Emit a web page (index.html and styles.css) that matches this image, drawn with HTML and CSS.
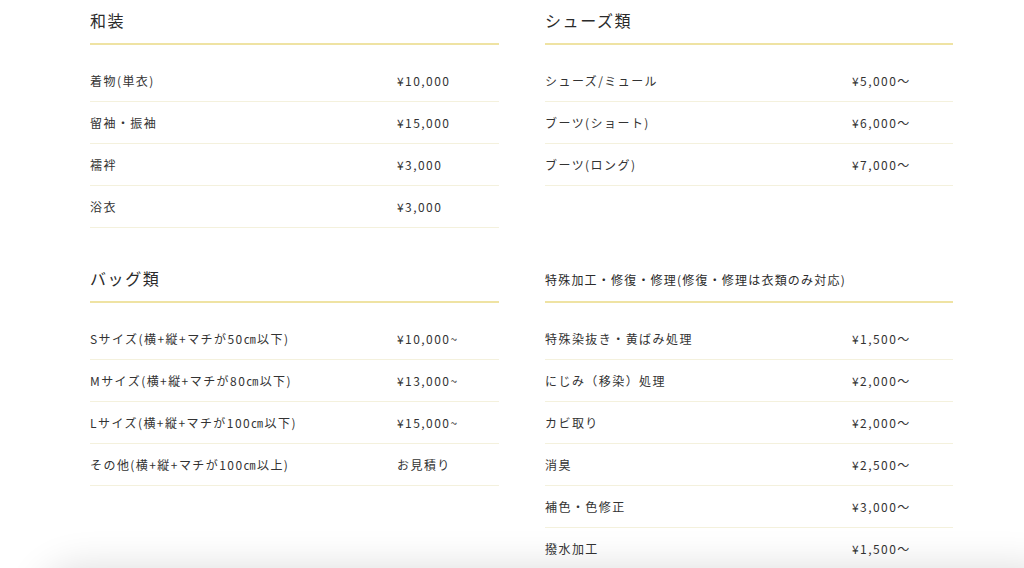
FILE: index.html
```html
<!DOCTYPE html>
<html lang="ja">
<head>
<meta charset="utf-8">
<title>料金表</title>
<link rel="stylesheet" href="styles.css">
</head>
<body>
<main class="menu">
  <section class="price-block">
    <h2 class="block-title">和装</h2>
    <ul class="price-list">
      <li class="price-row"><span class="item">着物(単衣)</span><span class="price">¥10,000</span></li>
      <li class="price-row"><span class="item">留袖・振袖</span><span class="price">¥15,000</span></li>
      <li class="price-row"><span class="item">襦袢</span><span class="price">¥3,000</span></li>
      <li class="price-row"><span class="item">浴衣</span><span class="price">¥3,000</span></li>
    </ul>
  </section>
  <section class="price-block">
    <h2 class="block-title">シューズ類</h2>
    <ul class="price-list">
      <li class="price-row"><span class="item">シューズ/ミュール</span><span class="price">¥5,000〜</span></li>
      <li class="price-row"><span class="item">ブーツ(ショート)</span><span class="price">¥6,000〜</span></li>
      <li class="price-row"><span class="item">ブーツ(ロング)</span><span class="price">¥7,000〜</span></li>
    </ul>
  </section>
  <section class="price-block">
    <h2 class="block-title">バッグ類</h2>
    <ul class="price-list">
      <li class="price-row"><span class="item">Sサイズ(横+縦+マチが50㎝以下)</span><span class="price">¥10,000~</span></li>
      <li class="price-row"><span class="item">Mサイズ(横+縦+マチが80㎝以下)</span><span class="price">¥13,000~</span></li>
      <li class="price-row"><span class="item">Lサイズ(横+縦+マチが100㎝以下)</span><span class="price">¥15,000~</span></li>
      <li class="price-row"><span class="item">その他(横+縦+マチが100㎝以上)</span><span class="price">お見積り</span></li>
    </ul>
  </section>
  <section class="price-block">
    <h2 class="block-title block-title--small">特殊加工・修復・修理(修復・修理は衣類のみ対応)</h2>
    <ul class="price-list">
      <li class="price-row"><span class="item">特殊染抜き・黄ばみ処理</span><span class="price">¥1,500〜</span></li>
      <li class="price-row"><span class="item">にじみ（移染）処理</span><span class="price">¥2,000〜</span></li>
      <li class="price-row"><span class="item">カビ取り</span><span class="price">¥2,000〜</span></li>
      <li class="price-row"><span class="item">消臭</span><span class="price">¥2,500〜</span></li>
      <li class="price-row"><span class="item">補色・色修正</span><span class="price">¥3,000〜</span></li>
      <li class="price-row"><span class="item">撥水加工</span><span class="price">¥1,500〜</span></li>
    </ul>
  </section>
</main>
<div class="bottom-bar"></div>
</body>
</html>
```

FILE: styles.css
```css
html, body {
  margin: 0;
  padding: 0;
  background: #fff;
  overflow: hidden;
}

body {
  font-family: "Noto Sans CJK JP", "Noto Sans", sans-serif;
  color: #333;
}

.menu {
  display: grid;
  grid-template-columns: 409px 408px;
  column-gap: 46px;
  row-gap: 38px;
  align-items: start;
  padding: 8px 0 0 90px;
}

.block-title {
  margin: 0;
  font-size: 16px;
  font-weight: 400;
  line-height: 24px;
  letter-spacing: 0.1em;
  padding-bottom: 11px;
  border-bottom: 2px solid #efe3a3;
  color: #2b2b2b;
}

.block-title--small {
  font-size: 12px;
  padding-top: 2px;
  padding-bottom: 9px;
}

.price-list {
  list-style: none;
  margin: 15px 0 0;
  padding: 0;
}

.price-row {
  display: grid;
  grid-template-columns: 307px 1fr;
  height: 41px;
  align-items: center;
  border-bottom: 1px solid #f4f1dd;
  font-size: 12px;
  letter-spacing: 0.12em;
}

.price {
  letter-spacing: 0.12em;
}

.bottom-bar {
  position: fixed;
  left: 40px;
  right: -40px;
  bottom: -80px;
  height: 80px;
  background: #fff;
  border-radius: 40px;
  box-shadow: 0 0 40px rgba(0, 0, 0, 0.14);
}
```
